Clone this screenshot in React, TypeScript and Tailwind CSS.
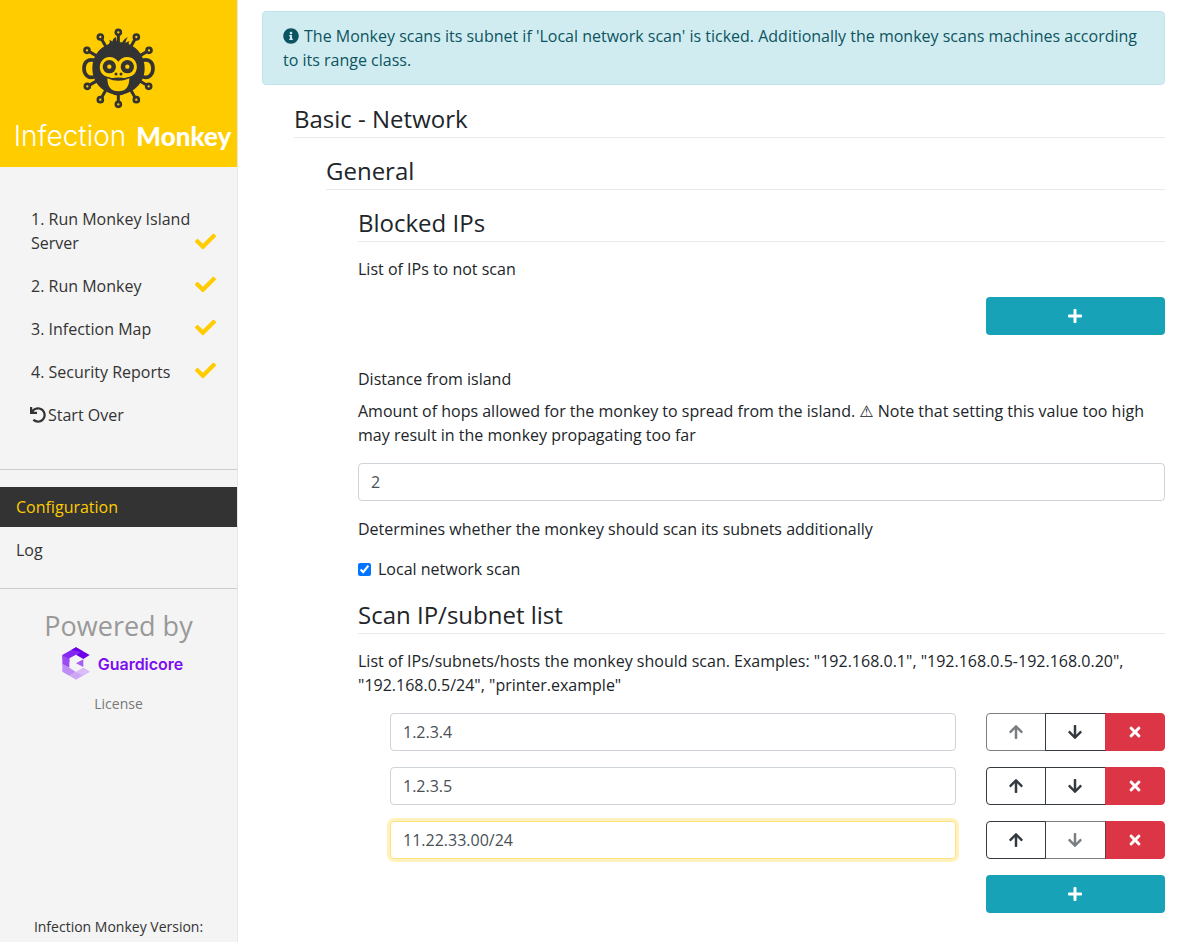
import React, { useState } from "react";
import { FaArrowDown, FaArrowUp, FaCheck, FaInfoCircle, FaPlus, FaTimes, FaUndo } from "react-icons/fa";

const SPORES = [
  [175, 52],
  [121, 66],
  [229, 66],
  [81, 106],
  [267, 106],
  [82, 214],
  [266, 214],
  [121, 254],
  [229, 254],
  [175, 268],
];

function MonkeyLogo() {
  return (
    <svg width="79" height="83" viewBox="57 36 237 249" aria-hidden="true">
      <g stroke="#333333" strokeWidth="9" strokeLinecap="round">
        {SPORES.map(([x, y]) => (
          <line key={`${x}-${y}`} x1="175" y1="160" x2={x} y2={y} />
        ))}
      </g>
      {SPORES.map(([x, y]) => (
        <circle key={`${x}-${y}`} cx={x} cy={y} r="7.5" fill="#ffcc00" stroke="#333333" strokeWidth="8" />
      ))}
      <path d="M103 136C84 130 72 142 72 160S84 192 103 185" fill="none" stroke="#333333" strokeWidth="11" />
      <path d="M248 136C267 130 279 142 279 160S267 192 248 185" fill="none" stroke="#333333" strokeWidth="11" />
      <path
        d="M175 82C168 80 170 74 167 66C161 70 158 74 157 80C154 76 151 76 147 75C151 79 150 84 145 88C116 99 97 127 97 160C97 205 132 239 175 239S254 205 254 160C254 127 235 99 207 88C205 85 206 82 209 79C203 79 199 82 196 85C197 80 199 72 204 66C196 69 190 75 187 82Z"
        fill="#333333"
      />
      <path
        d="M175 140C165 125 148 122 134 130C117 140 115 164 127 177C137 188 152 190 164 188Q175 187 186 188C198 190 213 188 223 177C235 164 233 140 217 130C202 122 185 125 175 140Z"
        fill="#ffcc00"
      />
      <path d="M131 182Q175 199 219 182Q222 197 209 206Q205 241 175 241Q145 241 141 206Q128 197 131 182Z" fill="#333333" />
      <path d="M142 190Q175 205 208 190Q208 229 175 229Q142 229 142 190Z" fill="#ffcc00" />
      <circle cx="148" cy="155" r="20" fill="#333333" />
      <circle cx="202" cy="155" r="20" fill="#333333" />
      <circle cx="148" cy="155" r="6.5" fill="#ffcc00" />
      <circle cx="202" cy="155" r="6.5" fill="#ffcc00" />
      <circle cx="168" cy="177" r="4.5" fill="#333333" />
      <circle cx="183" cy="177" r="4.5" fill="#333333" />
    </svg>
  );
}

function GuardicoreMark() {
  return (
    <svg width="28" height="33" viewBox="0 0 84 99" aria-hidden="true">
      <path d="M42 1L62 12L42 23L22 34V46L1 34V24Z" fill="#8427f2" />
      <path d="M42 1L83 24L64 36L42 23L55 15L28 9Z" fill="#6d00e8" />
      <path d="M1 25L22 36V62L1 52Z" fill="#9b4bf2" />
      <path d="M1 50L22 62L42 75L22 86L1 74Z" fill="#be8df5" />
      <path d="M42 75L64 62L83 74L42 98L22 86Z" fill="#cda6f6" />
      <path d="M64 62L83 74L62 86L42 75Z" fill="#d9bcf8" />
      <path d="M42 49L64 37V60Z" fill="#a45ff3" />
    </svg>
  );
}

const STEPS = ["1. Run Monkey Island Server", "2. Run Monkey", "3. Infection Map", "4. Security Reports"];

function Sidebar() {
  return (
    <aside className="flex w-[238px] shrink-0 flex-col border-r border-[#e7e7e7] bg-[#f4f4f4] text-[#333333]">
      <div className="flex h-[167px] flex-col items-center bg-[#ffcc00] pt-[27px]">
        <MonkeyLogo />
        <div className="mt-2 flex items-baseline gap-[10px] whitespace-nowrap pl-2 leading-9 text-white">
          <span className="font-['Inter'] text-[28px] font-light">Infection</span>
          <span className="font-['Lato'] text-[26px] font-black">Monkey</span>
        </div>
      </div>
      <ul className="flex flex-col gap-[19px] px-5 pt-10">
        {STEPS.map((step) => (
          <li key={step}>
            <a href="#" className="flex items-end justify-between pl-[11px]">
              <span className="w-[164px]">{step}</span>
              <FaCheck className="mb-[3px] mr-px size-[21px] shrink-0 text-[#ffcc00]" />
            </a>
          </li>
        ))}
        <li>
          <a href="#" className="flex items-center gap-[2px] pl-[10px]">
            <FaUndo className="size-4" />
            Start Over
          </a>
        </li>
      </ul>
      <hr className="mt-[42px] border-[#cccccc]" />
      <nav className="mt-[17px]">
        <a href="#" className="block bg-[#333333] px-4 py-2 text-[#ffcc00]">Configuration</a>
        <a href="#" className="mt-[3px] block px-4 py-2">Log</a>
      </nav>
      <hr className="mt-[18px] border-[#cccccc]" />
      <div className="flex flex-col items-center pt-4">
        <div className="text-[27px] leading-[42px] text-[#999999]">Powered by</div>
        <a href="#" className="flex items-center gap-2 pl-2 font-['Inter'] text-base font-semibold text-[#7d0cf0]">
          <GuardicoreMark />
          Guardicore
        </a>
        <a href="#" className="mt-3 text-[14px] leading-6 text-[#777777]">License</a>
      </div>
      <div className="mt-auto pb-1 text-center text-[14px] leading-[22px]">Infection Monkey Version:</div>
    </aside>
  );
}

function Legend({ children }: { children: React.ReactNode }) {
  return <h2 className="mb-[15px] border-b border-[#e9ecef] text-2xl leading-9">{children}</h2>;
}

function AddButton() {
  return (
    <div className="grid grid-cols-12 gap-[30px]">
      <button
        type="button"
        aria-label="Add"
        className="col-span-3 col-start-10 flex h-[38px] items-center justify-center rounded bg-[#17a2b8] text-white"
      >
        <FaPlus />
      </button>
    </div>
  );
}

const MOVE =
  "flex flex-1 items-center justify-center border border-[#343a40] bg-white text-[#343a40] disabled:opacity-65";
const FIELD = "h-[38px] w-full rounded border bg-white px-3 text-[#495057] outline-none";

function SubnetRow({ value, index, last, active }: { value: string; index: number; last: boolean; active: boolean }) {
  const [text, setText] = useState(value);
  return (
    <div className="grid grid-cols-12 gap-[30px]">
      <div className="col-span-9 pl-8">
        <input
          aria-label={`Subnet ${index + 1}`}
          value={text}
          onChange={(e) => setText(e.target.value)}
          className={active ? `${FIELD} border-[#ffe180] ring-3 ring-[#ffcc00]/25` : `${FIELD} border-[#ced4da]`}
        />
      </div>
      <div className="col-span-3 flex h-[38px]">
        <button type="button" aria-label="Move up" disabled={index === 0} className={`${MOVE} rounded-l`}>
          <FaArrowUp />
        </button>
        <button type="button" aria-label="Move down" disabled={last} className={`${MOVE} -ml-px`}>
          <FaArrowDown />
        </button>
        <button
          type="button"
          aria-label="Remove"
          className="-ml-px flex flex-1 items-center justify-center rounded-r border border-[#dc3545] bg-[#dc3545] text-white"
        >
          <FaTimes />
        </button>
      </div>
    </div>
  );
}

const SUBNETS = ["1.2.3.4", "1.2.3.5", "11.22.33.00/24"];

export default function App() {
  const [distance, setDistance] = useState("2");
  const [local, setLocal] = useState(true);
  return (
    <div className="flex min-h-screen bg-white font-['Open_Sans','DejaVu_Sans',sans-serif] text-base leading-6 text-[#212529]">
      <Sidebar />
      <main className="min-w-0 flex-1 pb-[29px] pl-6 pr-[29px] pt-[11px]">
        <div className="mb-4 rounded border border-[#bee5eb] bg-[#d1ecf1] px-5 py-3 text-[#0c5460]">
          <FaInfoCircle className="mb-[3px] mr-[5px] inline size-4" />
          The Monkey scans its subnet if 'Local network scan' is ticked. Additionally the monkey scans machines according
          to its range class.
        </div>
        <section className="pl-8">
          <Legend>Basic - Network</Legend>
          <section className="pl-8">
            <Legend>General</Legend>
            <div className="pl-8">
              <Legend>Blocked IPs</Legend>
              <p className="mb-4">List of IPs to not scan</p>
              <AddButton />

              <label htmlFor="distance" className="mb-2 mt-8 block">Distance from island</label>
              <p className="mb-4">
                Amount of hops allowed for the monkey to spread from the island. ⚠ Note that setting this value too high
                may result in the monkey propagating too far
              </p>
              <input
                id="distance"
                value={distance}
                onChange={(e) => setDistance(e.target.value)}
                className={`${FIELD} border-[#ced4da]`}
              />

              <p className="my-4">Determines whether the monkey should scan its subnets additionally</p>
              <label className="mb-4 flex items-center gap-[7px]">
                <input type="checkbox" checked={local} onChange={(e) => setLocal(e.target.checked)} className="size-[13px]" />
                Local network scan
              </label>

              <Legend>Scan IP/subnet list</Legend>
              <p className="mb-4">
                List of IPs/subnets/hosts the monkey should scan. Examples: "192.168.0.1", "192.168.0.5-192.168.0.20",
                "192.168.0.5/24", "printer.example"
              </p>
              <div className="flex flex-col gap-4">
                {SUBNETS.map((subnet, i) => (
                  <SubnetRow key={subnet} value={subnet} index={i} last={i === SUBNETS.length - 1} active={i === 2} />
                ))}
                <AddButton />
              </div>
            </div>
          </section>
        </section>
      </main>
    </div>
  );
}
